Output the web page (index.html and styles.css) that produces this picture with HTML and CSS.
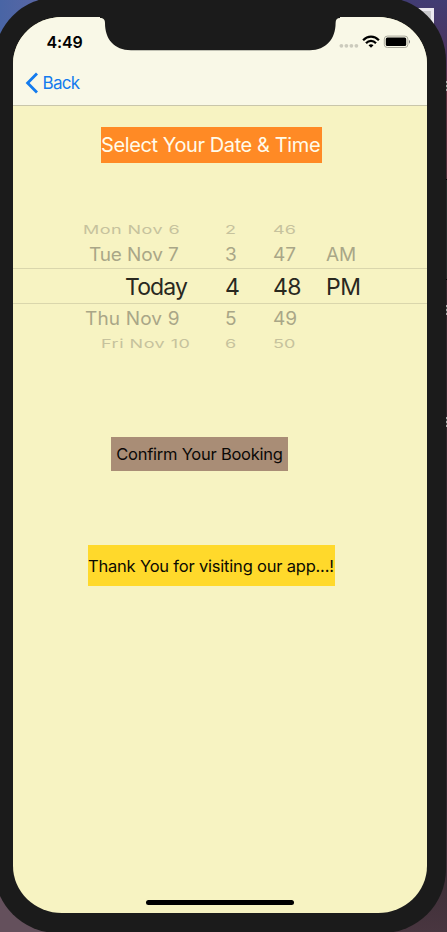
FILE: index.html
```html
<!DOCTYPE html>
<html lang="en">
<head>
<meta charset="utf-8">
<title>Select Your Date &amp; Time</title>
<link rel="stylesheet" href="styles.css">
</head>
<body>
<div class="desktop">
  <div class="desktop-window"></div>
  <div class="side-key"></div>
  <i class="tick tick-a"></i><i class="tick tick-b"></i><i class="tick tick-c"></i>
  <div class="phone">
    <main class="screen">
      <header class="nav">
        <div class="status">
          <time class="clock">4:49</time>
          <svg class="indicators" width="72" height="14" viewBox="0 0 72 14">
            <g fill="#cccbbd"><circle cx="2.4" cy="10.8" r="1.9"/><circle cx="7.4" cy="10.8" r="1.9"/><circle cx="12.4" cy="10.8" r="1.9"/><circle cx="17.4" cy="10.8" r="1.9"/></g>
            <g fill="none" stroke="#000" stroke-width="2.2"><path d="M24.1 5.2C28.7 0.4 35.3 0.4 39.9 5.2"/><path d="M27 8.2C29.8 5.2 34.2 5.2 37 8.2"/></g>
            <path d="M29.5 10.3Q32 8.2 34.5 10.3L32 12.8Z"/>
            <rect x="45.3" y="1.1" width="23.6" height="11.4" rx="3" fill="none" stroke="#aaa99c"/>
            <rect x="46.8" y="2.5" width="20.4" height="8.6" rx="1.5"/>
            <path d="M70 4.8Q72 6.8 70 8.8Z" fill="#777"/>
          </svg>
        </div>
        <a class="back"><svg width="14" height="22" viewBox="0 0 14 22"><path d="M12 1.4L2.6 11L12 20.6" fill="none" stroke="#137bee" stroke-width="2.8"/></svg><span>Back</span></a>
      </header>
      <h1 class="title">Select Your Date &amp; Time</h1>
      <div class="picker">
        <div class="row far before"><span class="day">Mon Nov 6</span><span>2</span><span class="minute">46</span><span></span></div>
        <div class="row near above"><span class="day">Tue Nov 7</span><span>3</span><span class="minute">47</span><span>AM</span></div>
        <div class="row current"><span class="day">Today</span><span>4</span><span class="minute">48</span><span>PM</span></div>
        <div class="row near below"><span class="day">Thu Nov 9</span><span>5</span><span class="minute">49</span><span></span></div>
        <div class="row far after"><span class="day">Fri Nov 10</span><span>6</span><span class="minute">50</span><span></span></div>
      </div>
      <button class="confirm">Confirm Your Booking</button>
      <p class="thanks">Thank You for visiting our app...!</p>
      <div class="home"></div>
    </main>
    <svg class="notch" width="240" height="34" viewBox="0 0 240 34"><path d="M0 0H240V1C237 1 235.6 2.5 235.6 6C235.6 22 226 33.2 210 33.2H31C14 33.2 5 22 5 6C5 2.5 3.5 1 0 1Z" fill="#1b1b1b"/></svg>
  </div>
</div>
</body>
</html>
```

FILE: styles.css
```css
* { box-sizing: border-box; }
body { margin: 0; font-family: Inter, "Liberation Sans", sans-serif; }
.desktop {
  position: relative;
  width: 447px;
  height: 932px;
  overflow: hidden;
  background: linear-gradient(90deg, #64505c 0 50%, transparent 50%), linear-gradient(#413c73 0, #4d335d 55px, #5b2f3d 90px, #30242a 300px, #30252b 800px, #493640 932px);
}
.desktop::before { content: ""; position: absolute; width: 60px; height: 60px; background: linear-gradient(90deg, #4965a5, #6267a4); }
.desktop-window { position: absolute; left: 418px; top: 8px; width: 16px; height: 16px; border: 3px solid #eceaf0; background: #c9c9cc; }
.side-key { position: absolute; left: 445px; top: 179px; width: 2px; height: 101px; background: #282828; border: solid #000; border-width: 1px 0; }
.tick { position: absolute; left: 446px; width: 1px; height: 10px; background: repeating-linear-gradient(#aaa 0 2px, #444 2px 4px); }
.tick-a { top: 81px; }
.tick-b { top: 305px; }
.tick-c { top: 417px; }
.phone {
  position: absolute;
  left: -6px;
  top: -3px;
  width: 452px;
  height: 936px;
  padding: 20px 19px;
  border-radius: 64px;
  background: #1b1b1b;
}
.screen {
  display: flex;
  flex-direction: column;
  width: 414px;
  height: 896px;
  overflow: hidden;
  border-radius: 49px / 47px;
  background: #f7f3c2;
}
.notch { position: absolute; left: 106px; top: 19.5px; }
.nav { height: 89px; flex: none; background: #f9f8e7; border-bottom: 1px solid #c9c6ab; }
.status { display: flex; justify-content: space-between; height: 49px; padding: 17px 16px 0 33.5px; }
.clock { font-size: 16px; line-height: 17px; font-weight: 600; letter-spacing: -.1px; }
.indicators { margin-top: 1px; }
.back { display: flex; align-items: center; width: max-content; margin: 6px 0 0 12px; color: #137bee; font-size: 17px; line-height: 22px; letter-spacing: -.7px; }
.back span { margin-left: 3.5px; }
.title { width: 221px; height: 36px; margin: 21px 0 0 88px; background: #ff8a25; color: #fffbea; font-size: 20px; line-height: 37px; font-weight: 400; letter-spacing: -.4px; white-space: nowrap; }
.picker { height: 140px; margin-top: 56px; color: #a9a687; }
.row { display: grid; grid-template-columns: 212px 48px 53px 1fr; white-space: nowrap; }
.day { justify-self: start; }
.far { height: 22px; font-size: 18px; line-height: 22px; color: #c6c29d; }
.near { height: 27px; font-size: 19px; line-height: 27px; }
.far span { transform: scaleY(.66); }
.near span { transform: scaleY(.95); }
.before .day { padding-left: 70px; letter-spacing: .45px; }
.above .day { padding-left: 76px; letter-spacing: -.12px; }
.above { height: 27px; }
.below { height: 28px; line-height: 29px; }
.below .day { padding-left: 72px; letter-spacing: .15px; }
.after { line-height: 24px; }
.after .day { padding-left: 88px; letter-spacing: .5px; }
.current { height: 36px; border: solid #dad6ac; border-width: 1px 0; font-size: 23px; line-height: 36px; color: #29281f; letter-spacing: -.5px; }
.current .day { padding-left: 112px; letter-spacing: -.9px; }
.confirm { width: 177px; height: 34px; margin: 78px 0 0 98px; padding: 0; border: 0; background: #a98d76; color: #0b0907; font: 400 16.5px/34px Inter, sans-serif; letter-spacing: -.24px; white-space: nowrap; }
.thanks { width: 247px; height: 41px; margin: 74px 0 0 75px; background: #ffd92b; color: #0b0a02; font-size: 16.5px; line-height: 42px; letter-spacing: -.2px; white-space: nowrap; }
.home { width: 148px; height: 5px; margin: auto 0 8px 133px; border-radius: 3px; background: #000; }
```
